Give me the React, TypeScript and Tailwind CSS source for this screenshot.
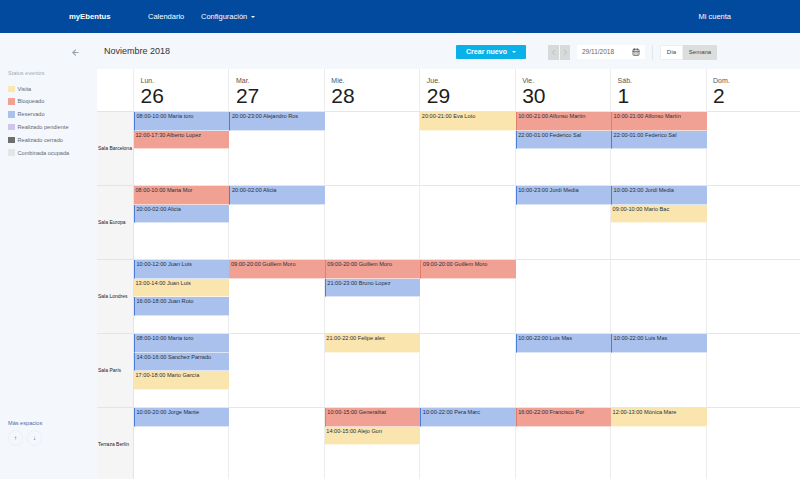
import { ArrowLeft, CalendarDays, ChevronLeft, ChevronRight } from "lucide-react";

type Kind = "b" | "r" | "y" | "R";
type Ev = [Kind, string];

const days: [string, string][] = [
  ["Lun.", "26"],
  ["Mar.", "27"],
  ["Mié.", "28"],
  ["Jue.", "29"],
  ["Vie.", "30"],
  ["Sáb.", "1"],
  ["Dom.", "2"],
];

const rows: { name: string; cells: Ev[][] }[] = [
  {
    name: "Sala Barcelona",
    cells: [
      [["b", "08:00-10:00 María toro"], ["r", "12:00-17:30 Alberto Lopez"]],
      [["b", "20:00-23:00 Alejandro Ros"]],
      [],
      [["y", "20:00-21:00 Eva Loto"]],
      [["R", "10:00-21:00 Alfonso Martín"], ["b", "22:00-01:00 Federico Sal"]],
      [["R", "10:00-21:00 Alfonso Martín"], ["b", "22:00-01:00 Federico Sal"]],
      [],
    ],
  },
  {
    name: "Sala Europa",
    cells: [
      [["r", "08:00-10:00 Marta Mor"], ["b", "20:00-02:00 Alicia"]],
      [["b", "20:00-02:00 Alicia"]],
      [],
      [],
      [["b", "10:00-23:00 Jordi Media"]],
      [["b", "10:00-23:00 Jordi Media"], ["y", "09:00-10:00 Mario Bac"]],
      [],
    ],
  },
  {
    name: "Sala Londres",
    cells: [
      [["b", "10:00-12:00 Juan Luis"], ["y", "13:00-14:00 Juan Luis"], ["b", "16:00-18:00 Juan Roto"]],
      [["r", "09:00-20:00 Guillem Moro"]],
      [["R", "09:00-20:00 Guillem Moro"], ["b", "21:00-23:00 Bruno Lopez"]],
      [["R", "09:00-20:00 Guillem Moro"]],
      [],
      [],
      [],
    ],
  },
  {
    name: "Sala París",
    cells: [
      [["b", "08:00-10:00 María toro"], ["b", "14:00-16:00 Sanchez Parrado"], ["y", "17:00-18:00 Mario García"]],
      [],
      [["y", "21:00-22:00 Felipe alex"]],
      [],
      [["b", "10:00-22:00 Luis Mas"]],
      [["b", "10:00-22:00 Luis Mas"]],
      [],
    ],
  },
  {
    name: "Terraza Berlín",
    cells: [
      [["b", "10:00-20:00 Jorge Mante"]],
      [],
      [["R", "10:00-15:00 Generalitat"], ["y", "14:00-15:00 Alejo Gon"]],
      [["b", "10:00-22:00 Pera Marc"]],
      [["R", "16:00-22:00 Francisco Por"]],
      [["y", "12:00-13:00 Mónica Mare"]],
      [],
    ],
  },
];

const legend: [string, string][] = [
  ["bg-[#fbe7b0]", "Visita"],
  ["bg-[#f0a193]", "Bloqueado"],
  ["bg-[#a9c1ec]", "Reservado"],
  ["bg-[#cfc6ea]", "Realizado pendiente"],
  ["bg-[#6e6e6e]", "Realizado cerrado"],
  ["bg-[#e4e6e6]", "Combinada ocupada"],
];

const kindClass: Record<Kind, string> = {
  b: "bg-[#a9c1ec] border-l border-l-[#4a7ed8]",
  r: "bg-[#f0a193]",
  R: "bg-[#f0a193] border-l border-l-[#df7f70]",
  y: "bg-[#fbe5ae]",
};

function Event({ ev }: { ev: Ev }) {
  return (
    <div className={`h-[18.5px] -mr-px pl-[1.5px] text-[5.6px] leading-[8px] whitespace-nowrap overflow-hidden text-[#27303e] border-b border-b-white/60 ${kindClass[ev[0]]}`}>
      {ev[1]}
    </div>
  );
}

export default function App() {
  return (
    <div className="w-[800px] h-[479px] overflow-hidden bg-[#f4f7fb] font-['Liberation_Sans',sans-serif] text-[#333]">
      <header className="h-[33px] bg-[#014a9e] text-white flex items-center text-[7.5px]">
        <span className="ml-[69px] w-[79px] font-bold text-[7.7px]">myEbentus</span>
        <span className="w-[53px]">Calendario</span>
        <span>Configuración</span>
        <span className="ml-[4px] w-0 h-0 border-x-[2px] border-x-transparent border-t-[2px] border-t-white"></span>
        <span className="ml-auto mr-[69px]">Mi cuenta</span>
      </header>
      <div className="flex h-[446px]">
        <aside className="w-[97px] shrink-0 flex flex-col pl-[8px]">
          <div className="h-[36px] flex items-center pt-[2px]">
            <ArrowLeft className="ml-[63px] w-[9px] h-[9px] text-[#9aa3ad]" strokeWidth={3} />
          </div>
          <div className="text-[5.5px] text-[#a3abb5] mt-[1px] leading-[7px]">Status eventos</div>
          <div className="mt-[8.5px] flex flex-col gap-[6.3px]">
            {legend.map(([c, t]) => (
              <div key={t} className="flex items-center h-[6.5px] gap-[3px] text-[5.6px] text-[#5f6873]">
                <span className={`w-[6.5px] h-[6.5px] ${c}`}></span>
                <span>{t}</span>
              </div>
            ))}
          </div>
          <div className="mt-auto mb-[33px]">
            <div className="text-[5.6px] text-[#4d6ea5] leading-[7px]">Más espacios</div>
            <div className="flex gap-[4px] mt-[3px]">
              <span className="w-[15px] h-[16px] rounded-full border border-[#eceff4] flex items-center justify-center text-[6px] text-[#1f4f96] font-bold">↑</span>
              <span className="w-[15px] h-[16px] rounded-full border border-[#eceff4] flex items-center justify-center text-[6px] text-[#1f4f96] font-bold">↓</span>
            </div>
          </div>
        </aside>
        <main className="flex-1 min-w-0">
          <div className="h-[36px] flex items-center pt-[2px]">
            <span className="ml-[7px] text-[9px] text-[#333] w-[352px]">Noviembre 2018</span>
            <button className="w-[70px] h-[14px] rounded-[1px] bg-[#0ab0e8] text-white text-[7px] font-bold flex items-center justify-center gap-[5px]">
              Crear nuevo
              <span className="w-0 h-0 border-x-[2px] border-x-transparent border-t-[2px] border-t-white"></span>
            </button>
            <span className="ml-[22px] w-[11px] h-[15px] bg-[#d8dada] flex items-center justify-center text-[#a3a7a8]">
              <ChevronLeft className="w-[9px] h-[11px]" strokeWidth={1.5} />
            </span>
            <span className="ml-[1px] w-[10px] h-[15px] bg-[#d8dada] flex items-center justify-center text-[#a3a7a8]">
              <ChevronRight className="w-[9px] h-[11px]" strokeWidth={1.5} />
            </span>
            <div className="ml-[7px] w-[68px] h-[14px] bg-white flex items-center justify-between px-[5px] text-[6.5px] text-[#666]">
              29/11/2018
              <CalendarDays className="w-[8px] h-[8px] text-[#555]" strokeWidth={2.5} />
            </div>
            <span className="ml-[7px] w-px h-[15px] bg-[#e3e6ea]"></span>
            <div className="ml-[7px] w-[57px] h-[15px] flex items-center text-[6px] text-[#444]">
              <span className="w-[23px] h-full bg-white border border-[#eceef0] flex items-center justify-center">Día</span>
              <span className="flex-1 h-full bg-[#dcdddd] flex items-center justify-center">Semana</span>
            </div>
          </div>
          <div className="grid grid-cols-[37px_repeat(7,95.43px)] grid-rows-[42px_repeat(5,74px)] bg-white">
            <div className="bg-white border-r border-r-[#ececec]"></div>
            {days.map(([d, n]) => (
              <div key={d} className="border-r border-r-[#ececec] pl-[6.5px] pt-[8px] text-[#1d1d1d] bg-white">
                <div className="text-[7px] leading-[8px] text-[#555]">{d}</div>
                <div className="text-[21px] leading-[22px]">{n}</div>
              </div>
            ))}
            {rows.map((r) => (
              <div key={r.name} className="contents">
                <div className="bg-[#f5f5f5] border-t border-t-[#e4e4e4] border-r border-r-[#e4e4e4] flex items-center text-[5px] pl-[1px] text-[#222]">
                  {r.name}
                </div>
                {r.cells.map((c, i) => (
                  <div key={i} className="border-t border-t-[#e6e6e6] border-r border-r-[#ececec] flex flex-col min-w-0">
                    {c.map((e, j) => (
                      <Event key={j} ev={e} />
                    ))}
                  </div>
                ))}
              </div>
            ))}
          </div>
        </main>
      </div>
    </div>
  );
}
